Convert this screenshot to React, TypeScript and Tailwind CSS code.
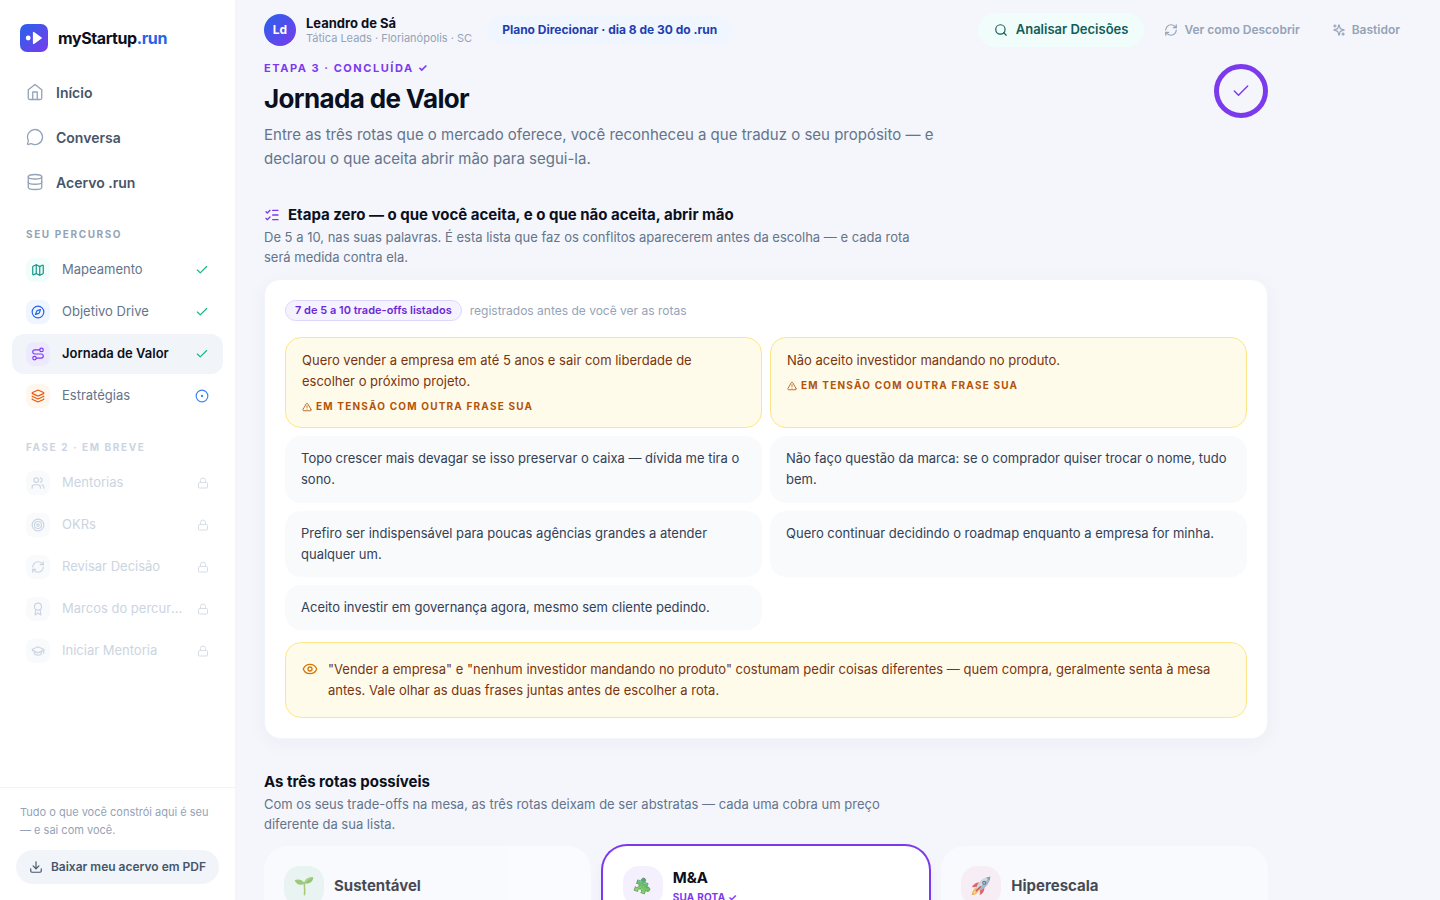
import type { ComponentType, ReactNode } from "react";
import {
  Award,
  Check,
  CircleDot,
  Compass,
  Database,
  Download,
  Eye,
  GraduationCap,
  Layers,
  ListChecks,
  Lock,
  Map as MapIcon,
  MessageCircle,
  RefreshCw,
  Route,
  Search,
  Target,
  TriangleAlert,
  Users,
  type LucideIcon,
} from "lucide-react";

function HomeIcon() {
  return (
    <svg width="18" height="18" viewBox="0 0 24 24" fill="none" stroke="currentColor" strokeWidth="1.75" strokeLinecap="round" strokeLinejoin="round" aria-hidden="true">
      <path d="m3 9 9-7 9 7v11a2 2 0 0 1-2 2H5a2 2 0 0 1-2-2z" />
      <path d="M9 22V12h6v10" />
    </svg>
  );
}

function SparklesIcon() {
  return (
    <svg width="14" height="14" viewBox="0 0 24 24" fill="none" stroke="currentColor" strokeWidth="2" strokeLinecap="round" strokeLinejoin="round" aria-hidden="true">
      <path d="m12 3-1.912 5.813a2 2 0 0 1-1.275 1.275L3 12l5.813 1.912a2 2 0 0 1 1.275 1.275L12 21l1.912-5.813a2 2 0 0 1 1.275-1.275L21 12l-5.813-1.912a2 2 0 0 1-1.275-1.275L12 3Z" />
      <path d="M5 3v4M19 17v4M3 5h4M17 19h4" />
    </svg>
  );
}

function Seedling() {
  return (
    <svg width="20" height="20" viewBox="0 0 20 20" aria-hidden="true">
      <path d="M10.6 6.6c-.9 3.8.9 6.9-.2 12.1" fill="none" stroke="#8dbb55" strokeWidth="1.5" strokeLinecap="round" />
      <path d="M10.7 7.2C8 3.3 3.6 2.9.7 4.2c1.1 3.7 5.6 6.3 10 3z" fill="#7fbb4e" />
      <path d="M10.7 7.2C7.6 5.6 4.2 4.4.7 4.2c2.3.2 6.6 1.3 10 3z" fill="#a8d672" />
      <path d="M10.7 7.2C10.4 3 14.6.8 19.3 1.4c-.4 4.3-4 6.8-8.6 5.8z" fill="#74b544" />
      <path d="M10.7 7.2c2.5-2.9 5.3-4.8 8.6-5.8-4.5-.2-8.3 1.4-8.6 5.8z" fill="#9ccc64" />
    </svg>
  );
}

function Puzzle() {
  return (
    <svg width="20" height="20" viewBox="0 0 20 20" aria-hidden="true">
      <defs>
        <linearGradient id="piece" x1="0.5" y1="0" x2="0.3" y2="1">
          <stop offset="0" stopColor="#46a57c" />
          <stop offset="1" stopColor="#97d860" />
        </linearGradient>
      </defs>
      <g transform="rotate(20 10 10)">
        <path
          d="M3 6h3.900A2.200 2.200 0 1 1 10.100 6H14v3.900A2.200 2.200 0 1 1 14 13.100V17h-3.900A2 2 0 1 0 6.900 17H3v-3.900A2 2 0 1 0 3 9.900z"
          fill="url(#piece)"
          stroke="#4c8a58"
          strokeWidth="0.6"
          strokeLinejoin="round"
        />
        <path d="M3.800 6.800h3.500M10 6.800h3.200" stroke="#8fd8ae" strokeWidth="0.7" strokeLinecap="round" />
      </g>
    </svg>
  );
}

function Rocket() {
  return (
    <svg width="20" height="20" viewBox="0 0 20 20" aria-hidden="true">
      <path d="M5.2 11.8C2.8 12.6 1 15.6.6 19.3c3.7-.3 6.4-2.2 7.4-4.7z" fill="#f39a32" />
      <path d="M5.2 13.2c-1.5.8-2.5 2.5-2.8 4.2 2-.3 3.4-1.3 4.3-2.7z" fill="#fde15a" />
      <path d="M8.6 6.7C5.7 6.2 2.6 7.9.9 11.3l5.2-.4z" fill="#d33a35" />
      <path d="M13.3 11.4c.5 2.9-1.2 6-4.6 7.7l.4-5.2z" fill="#d33a35" />
      <path d="M5.3 11.7C7.2 6.3 12 1.3 19.3.7c-.6 7.3-5.6 12.1-11 14z" fill="#8fa3b8" />
      <path d="M5.3 11.7C7.2 6.3 12 1.3 19.3.7L6.8 13.2z" fill="#c4d0dc" />
      <path d="M15.2 1.6c1.3-.5 2.6-.8 4.1-.9-.1 1.5-.4 2.8-.9 4.1z" fill="#6f8298" />
      <circle cx="13.2" cy="6.8" r="2" fill="#3b4254" />
      <circle cx="13.2" cy="6.8" r="1.1" fill="#77b7dd" />
      <path d="m5.1 15 4.3-4.3" stroke="#b52c2c" strokeWidth="1.5" strokeLinecap="round" />
    </svg>
  );
}

const STEPS: { label: string; icon: LucideIcon; tile: string; done: boolean; active?: boolean }[] = [
  { label: "Mapeamento", icon: MapIcon, tile: "bg-[#f0fdfa] text-[#0d9488]", done: true },
  { label: "Objetivo Drive", icon: Compass, tile: "bg-[#eff6ff] text-[#2563eb]", done: true },
  { label: "Jornada de Valor", icon: Route, tile: "bg-[#ede9fe] text-[#7c3aed]", done: true, active: true },
  { label: "Estratégias", icon: Layers, tile: "bg-[#fff7ed] text-[#ea580c]", done: false },
];

const LOCKED: { label: string; icon: LucideIcon }[] = [
  { label: "Mentorias", icon: Users },
  { label: "OKRs", icon: Target },
  { label: "Revisar Decisão", icon: RefreshCw },
  { label: "Marcos do percurso", icon: Award },
  { label: "Iniciar Mentoria", icon: GraduationCap },
];

const TRADE_OFFS = [
  { text: "Quero vender a empresa em até 5 anos e sair com liberdade de escolher o próximo projeto.", tension: true },
  { text: "Não aceito investidor mandando no produto.", tension: true },
  { text: "Topo crescer mais devagar se isso preservar o caixa — dívida me tira o sono.", tension: false },
  { text: "Não faço questão da marca: se o comprador quiser trocar o nome, tudo bem.", tension: false },
  { text: "Prefiro ser indispensável para poucas agências grandes a atender qualquer um.", tension: false },
  { text: "Quero continuar decidindo o roadmap enquanto a empresa for minha.", tension: false },
  { text: "Aceito investir em governança agora, mesmo sem cliente pedindo.", tension: false },
];

type RouteInfo = { name: string; icon: ComponentType; tile: string; chosen: boolean };

const ROUTES: RouteInfo[] = [
  { name: "Sustentável", icon: Seedling, tile: "bg-[#e4f3ef]", chosen: false },
  { name: "M&A", icon: Puzzle, tile: "bg-[#f5f0fe]", chosen: true },
  { name: "Hiperescala", icon: Rocket, tile: "bg-[#f8ecf3]", chosen: false },
];

function Logo() {
  return (
    <a href="#" className="flex items-center gap-[10px] px-5">
      <svg width="28" height="28" viewBox="0 0 28 28" aria-hidden="true">
        <defs>
          <linearGradient id="logo" x1="0" y1="0" x2="1" y2="1">
            <stop offset="0" stopColor="#2563eb" />
            <stop offset="1" stopColor="#7c3aed" />
          </linearGradient>
        </defs>
        <rect width="28" height="28" rx="7" fill="url(#logo)" />
        <circle cx="8.2" cy="14" r="2.4" fill="#fff" />
        <path d="M13.6 8.6v10.8l7.6-5.4z" fill="#fff" stroke="#fff" strokeWidth="1.4" strokeLinejoin="round" />
      </svg>
      <span className="text-[16px] font-bold leading-7 tracking-tight text-[#0b1020]">
        myStartup<span className="text-[#2563eb]">.run</span>
      </span>
    </a>
  );
}

function MainLink({ label, children }: { label: string; children: ReactNode }) {
  return (
    <a href="#" className="flex h-[42px] items-center gap-3 rounded-xl px-[14px] text-[14px] font-semibold text-[#475569]">
      <span className="text-[#94a3b8]">{children}</span>
      {label}
    </a>
  );
}

function Sidebar() {
  return (
    <aside className="flex w-[236px] flex-none flex-col border-r border-slate-100 bg-white pt-6">
      <Logo />
      <nav className="mt-[19px] flex min-h-0 flex-1 flex-col overflow-hidden px-3">
        <div className="flex flex-col gap-[3px]">
          <MainLink label="Início">
            <HomeIcon />
          </MainLink>
          <MainLink label="Conversa">
            <MessageCircle size={18} strokeWidth={1.75} />
          </MainLink>
          <MainLink label="Acervo .run">
            <Database size={18} strokeWidth={1.75} />
          </MainLink>
        </div>

        <h2 className="mt-[23px] px-[14px] text-[10px] font-bold leading-4 tracking-[0.16em] text-[#94a3b8]">SEU PERCURSO</h2>
        <div className="mt-2 flex flex-col gap-[2px]">
          {STEPS.map(({ label, icon: Icon, tile, done, active }) => (
            <a
              key={label}
              href="#"
              className={`flex h-10 items-center gap-3 rounded-xl px-[14px] text-[13px] ${
                active ? "bg-[#f1f5f9] font-semibold text-[#0b1020]" : "text-[#64748b]"
              }`}
            >
              <span className={`flex size-6 items-center justify-center rounded-lg ${tile}`}>
                <Icon size={14} />
              </span>
              <span className="flex-1 truncate">{label}</span>
              {done ? <Check size={14} className="text-[#10b981]" /> : <CircleDot size={14} className="text-[#3b82f6]" />}
            </a>
          ))}
        </div>

        <h2 className="mt-[23px] px-[14px] text-[10px] font-bold leading-4 tracking-[0.16em] text-[#cbd5e1]">FASE 2 · EM BREVE</h2>
        <div className="mt-2 flex flex-col gap-[2px]">
          {LOCKED.map(({ label, icon: Icon }) => (
            <div key={label} className="flex h-10 items-center gap-3 px-[14px] text-[13px] text-[#cbd5e1]">
              <span className="flex size-6 items-center justify-center rounded-lg bg-slate-50">
                <Icon size={14} />
              </span>
              <span className="flex-1 truncate">{label}</span>
              <Lock size={12} className="flex-none text-[#d5dde7]" />
            </div>
          ))}
        </div>
      </nav>

      <div className="border-t border-slate-100 px-4 pb-4 pt-[15px]">
        <p className="px-1 text-[11px] leading-[18px] text-[#94a3b8]">
          Tudo o que você constrói aqui é seu — e sai com você.
        </p>
        <button className="mt-[11px] flex h-[34px] w-full items-center justify-center gap-2 rounded-full bg-[#f1f5f9] text-[12px] font-semibold text-[#475569]">
          <Download size={14} />
          Baixar meu acervo em PDF
        </button>
      </div>
    </aside>
  );
}

function Topbar() {
  return (
    <header className="flex h-[60px] items-center px-7">
      <div className="flex size-8 items-center justify-center rounded-full bg-[linear-gradient(135deg,#2563eb,#7c3aed)] text-[12px] font-bold text-white">
        Ld
      </div>
      <div className="ml-[10px]">
        <div className="text-[13px] font-bold leading-4 text-[#0b1020]">Leandro de Sá</div>
        <div className="text-[11px] leading-[14px] text-[#94a3b8]">Tática Leads · Florianópolis · SC</div>
      </div>
      <span className="ml-4 rounded-full bg-[#eff6ff] px-[14px] py-1 text-[12px] font-bold leading-5 text-[#1e40af]">
        Plano Direcionar · dia 8 de 30 do .run
      </span>
      <div className="ml-auto flex items-center gap-2">
        <button className="flex h-[34px] items-center gap-2 rounded-full bg-[#f0fdfa] px-4 text-[13px] font-semibold text-[#115e59]">
          <Search size={14} />
          Analisar Decisões
        </button>
        <button className="flex h-[34px] items-center gap-[6px] rounded-full px-3 text-[12px] font-semibold text-[#94a3b8]">
          <RefreshCw size={14} />
          Ver como Descobrir
        </button>
        <button className="flex h-[34px] items-center gap-[6px] rounded-full px-3 text-[12px] font-semibold text-[#94a3b8]">
          <SparklesIcon />
          Bastidor
        </button>
      </div>
    </header>
  );
}

function SectionHead({ title, icon, children }: { title: string; icon?: ReactNode; children: ReactNode }) {
  return (
    <div>
      <h2 className="flex items-center gap-2 text-[15px] font-bold leading-6 text-[#0b1020]">
        {icon}
        {title}
      </h2>
      <p className="max-w-[660px] text-[13px] leading-5 text-[#64748b]">{children}</p>
    </div>
  );
}

function TradeOff({ text, tension }: { text: string; tension: boolean }) {
  if (!tension) {
    return <li className="rounded-2xl bg-slate-50 px-4 py-3 text-[#334155]">{text}</li>;
  }
  return (
    <li className="rounded-2xl border border-[#fde68a] bg-[#fffbeb] px-4 py-3 text-[#78350f]">
      {text}
      <div className="mt-[6px] flex items-center gap-1 text-[10px] font-bold leading-[17px] tracking-[0.12em] text-[#b45309]">
        <TriangleAlert size={10} />
        EM TENSÃO COM OUTRA FRASE SUA
      </div>
    </li>
  );
}

function RouteCard({ name, icon: Icon, tile, chosen }: RouteInfo) {
  return (
    <article
      className={`min-h-40 rounded-3xl p-5 ${
        chosen ? "bg-white shadow-lg shadow-[#7c3aed]/15 ring-2 ring-[#7c3aed]" : "bg-[#fbfcff] opacity-75"
      }`}
    >
      <div className="flex items-center gap-[10px]">
        <span className={`flex size-10 items-center justify-center rounded-2xl ${tile}`}>
          <Icon />
        </span>
        <div>
          <h3 className="text-[15px] font-bold leading-[22px] text-[#0b1020]">{name}</h3>
          {chosen && <div className="text-[10px] font-bold leading-4 tracking-wide text-[#7c3aed]">SUA ROTA ✓</div>}
        </div>
      </div>
    </article>
  );
}

export default function App() {
  return (
    <div className="flex h-screen overflow-hidden bg-[#f4f6fb] font-['Inter',sans-serif] antialiased">
      <Sidebar />
      <div className="flex min-w-0 flex-1 flex-col">
        <Topbar />
        <main className="min-h-0 flex-1 overflow-y-auto px-7 [scrollbar-width:none]">
          <div className="max-w-[1004px]">
            <div className="flex items-start justify-between">
              <div>
                <div className="text-[11px] font-bold leading-4 tracking-[0.14em] text-[#7c3aed]">ETAPA 3 · CONCLUÍDA ✓</div>
                <h1 className="mt-1 text-[26px] font-bold leading-[38px] tracking-tight text-[#0b1020]">Jornada de Valor</h1>
                <p className="mt-[5px] max-w-[680px] text-[15px] leading-6 text-[#64748b]">
                  Entre as três rotas que o mercado oferece, você reconheceu a que traduz o seu propósito — e declarou o
                  que aceita abrir mão para segui-la.
                </p>
              </div>
              <div className="mt-1 flex size-[54px] items-center justify-center rounded-full border-[5px] border-[#7c3aed] text-[#7c3aed]">
                <Check size={20} strokeWidth={1.75} />
              </div>
            </div>

            <section className="mt-8">
              <SectionHead
                title="Etapa zero — o que você aceita, e o que não aceita, abrir mão"
                icon={<ListChecks size={16} className="text-[#7c3aed]" />}
              >
                De 5 a 10, nas suas palavras. É esta lista que faz os conflitos aparecerem antes da escolha — e cada rota
                será medida contra ela.
              </SectionHead>
              <div className="mt-3 rounded-2xl border border-slate-100 bg-white p-5 shadow-[0_4px_20px_rgba(30,41,120,0.04)]">
                <div className="flex items-center gap-2">
                  <span className="rounded-full border border-[#ddd6fe] bg-[#f5f3ff] px-[9px] text-[11px] font-semibold leading-[19px] text-[#6d28d9]">
                    7 de 5 a 10 trade-offs listados
                  </span>
                  <span className="text-[12px] leading-[19px] text-[#94a3b8]">registrados antes de você ver as rotas</span>
                </div>
                <ul className="mt-4 grid grid-cols-2 gap-2 text-[13px] leading-relaxed">
                  {TRADE_OFFS.map((t) => (
                    <TradeOff key={t.text} {...t} />
                  ))}
                </ul>
                <div className="mt-3 flex gap-[10px] rounded-2xl border border-[#fde68a] bg-[#fffbeb] p-4 text-[13px] leading-relaxed text-[#78350f]">
                  <Eye size={16} className="mt-[2px] flex-none text-[#d97706]" />
                  <p>
                    "Vender a empresa" e "nenhum investidor mandando no produto" costumam pedir coisas diferentes — quem
                    compra, geralmente senta à mesa antes. Vale olhar as duas frases juntas antes de escolher a rota.
                  </p>
                </div>
              </div>
            </section>

            <section className="mt-[31px] pb-8">
              <SectionHead title="As três rotas possíveis">
                Com os seus trade-offs na mesa, as três rotas deixam de ser abstratas — cada uma cobra um preço diferente
                da sua lista.
              </SectionHead>
              <div className="mt-3 grid grid-cols-3 gap-3">
                {ROUTES.map((r) => (
                  <RouteCard key={r.name} {...r} />
                ))}
              </div>
            </section>
          </div>
        </main>
      </div>
    </div>
  );
}
